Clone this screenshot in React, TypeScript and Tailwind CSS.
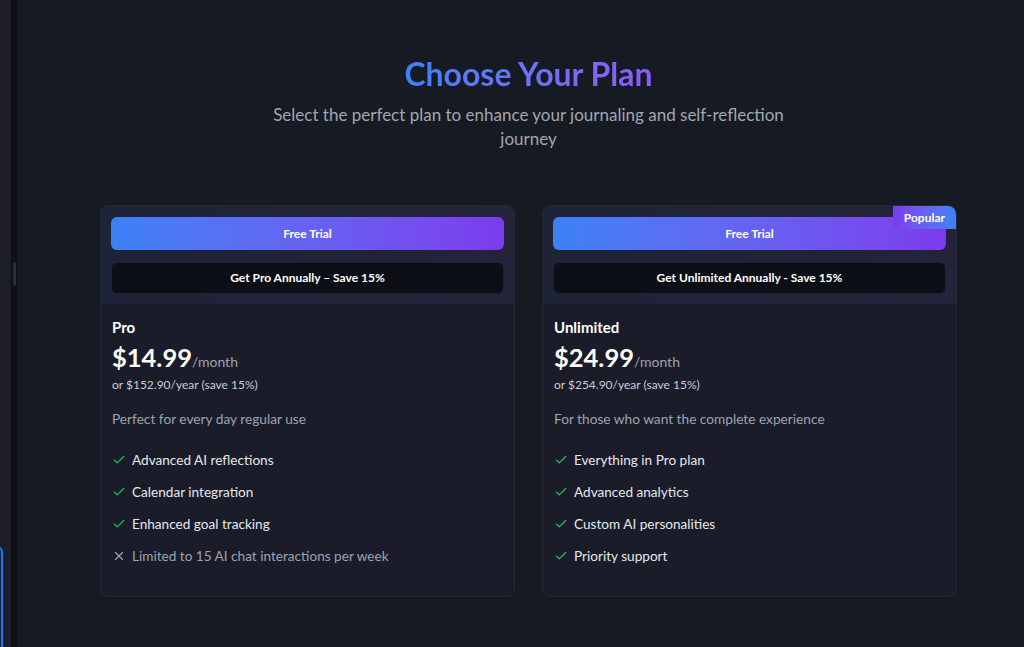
import React from "react";

const font = { fontFamily: 'Lato, "Noto Sans", sans-serif' };

function CheckIcon() {
  return (
    <svg width="14" height="14" viewBox="0 0 24 24" fill="none" stroke="#22c55e" strokeWidth="2" strokeLinecap="round" strokeLinejoin="round" className="shrink-0">
      <path d="M20 6 9 17l-5-5" />
    </svg>
  );
}

function XIcon() {
  return (
    <svg width="14" height="14" viewBox="0 0 24 24" fill="none" stroke="#9ca3af" strokeWidth="2" strokeLinecap="round" strokeLinejoin="round" className="shrink-0">
      <path d="M18 6 6 18" />
      <path d="m6 6 12 12" />
    </svg>
  );
}

type Feature = { text: string; ok: boolean };

function PlanCard(props: {
  name: string;
  price: string;
  yearly: string;
  desc: string;
  annual: string;
  features: Feature[];
  popular?: boolean;
}) {
  return (
    <div className="relative flex flex-col rounded-lg border border-[#232735] bg-[#1a1d29] overflow-hidden">
      {props.popular && (
        <div className="absolute right-0 top-0 rounded-bl-md rounded-tr-lg bg-gradient-to-r from-[#7c3aed] to-[#3b82f6] px-[11px] py-[4px] text-[12px] font-bold leading-[15px] text-white">
          Popular
        </div>
      )}
      <div className="flex flex-col gap-[12px] bg-gradient-to-r from-[#1e2338] to-[#23233a] px-[10px] pt-[11px] pb-[10px]">
        <button className="h-[33px] rounded-md bg-gradient-to-r from-[#3b82f6] to-[#7c3aed] text-[12px] font-bold text-white">
          Free Trial
        </button>
        <button className="h-[32px] rounded-md border border-[#1d2230] bg-[#0c0f16] text-[12px] font-bold text-white">
          {props.annual}
        </button>
      </div>
      <div className="flex flex-col px-[11px] pt-[12px] pb-[30px]">
        <div className="text-[15px] font-bold leading-[22px] text-white">{props.name}</div>
        <div className="mt-[3px] flex items-baseline leading-[32px]">
          <span className="text-[25.5px] font-bold text-white">{props.price}</span>
          <span className="text-[14px] text-[#9ca3af]">/month</span>
        </div>
        <div className="mt-[-1px] text-[12px] leading-[16px] text-[#c9ccd3]">{props.yearly}</div>
        <div className="mt-[16px] text-[13.7px] leading-[20px] text-[#9ca3af]">{props.desc}</div>
        <ul className="mt-[21px] flex flex-col gap-[12px]">
          {props.features.map((f) => (
            <li key={f.text} className="flex items-center gap-[6px] text-[13.6px] leading-[20px]">
              {f.ok ? <CheckIcon /> : <XIcon />}
              <span className={f.ok ? "text-[#e5e7eb]" : "text-[#9ca3af]"}>{f.text}</span>
            </li>
          ))}
        </ul>
      </div>
    </div>
  );
}

export default function App() {
  return (
    <div className="flex h-[647px] w-[1024px] overflow-hidden bg-[#161a22]" style={font}>
      <aside className="relative w-[11px] shrink-0 overflow-hidden bg-[#1b1e27]">
        <div className="absolute left-[-100px] top-[546px] h-[200px] w-[103px] rounded-md border-2 border-[#0a7cff]" />
      </aside>
      <div className="w-[6px] shrink-0 bg-[#0f1015] pt-[262px]">
        <div className="mx-auto h-[24px] w-[3px] rounded-full bg-[#2a2d38]" />
      </div>
      <main className="flex flex-1 flex-col items-center pl-4 pt-[56px]">
        <h1 className="bg-gradient-to-r from-[#3b82f6] to-[#8b5cf6] bg-clip-text text-[32px] font-bold leading-[36px] text-transparent">
          Choose Your Plan
        </h1>
        <p className="mt-[11px] max-w-[540px] text-center text-[17px] leading-[24px] text-[#a1a6b0]">
          Select the perfect plan to enhance your journaling and self-reflection journey
        </p>
        <div className="mt-[54px] grid w-[857px] grid-cols-2 gap-[27px]">
          <PlanCard
            name="Pro"
            price="$14.99"
            yearly="or $152.90/year (save 15%)"
            desc="Perfect for every day regular use"
            annual="Get Pro Annually – Save 15%"
            features={[
              { text: "Advanced AI reflections", ok: true },
              { text: "Calendar integration", ok: true },
              { text: "Enhanced goal tracking", ok: true },
              { text: "Limited to 15 AI chat interactions per week", ok: false },
            ]}
          />
          <PlanCard
            name="Unlimited"
            price="$24.99"
            yearly="or $254.90/year (save 15%)"
            desc="For those who want the complete experience"
            annual="Get Unlimited Annually - Save 15%"
            popular
            features={[
              { text: "Everything in Pro plan", ok: true },
              { text: "Advanced analytics", ok: true },
              { text: "Custom AI personalities", ok: true },
              { text: "Priority support", ok: true },
            ]}
          />
        </div>
      </main>
    </div>
  );
}
